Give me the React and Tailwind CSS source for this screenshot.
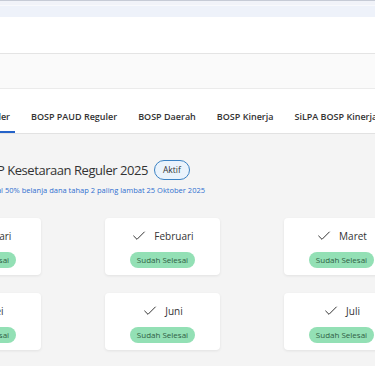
import React from 'react';
import { Check } from 'lucide-react';

const tabs = ['BOSP PAUD Reguler', 'BOSP Daerah', 'BOSP Kinerja', 'SiLPA BOSP Kinerja'];

const months = ['Januari', 'Februari', 'Maret', 'April', 'Mei', 'Juni', 'Juli', 'Agustus'];

function MonthCard({ name }) {
  return (
    <div className="w-[115px] h-[57px] bg-white rounded-[4px] shadow-[0_1px_3px_rgba(0,0,0,0.08)] flex flex-col items-center pt-[10px]">
      <div className="flex items-center gap-[7px] text-[10px] text-[#333] leading-[14px]">
        <Check size={16} strokeWidth={1.5} className="text-[#333]" />
        <span>{name}</span>
      </div>
      <span className="mt-[8px] h-[16px] px-[7px] rounded-full bg-[#93e0b5] text-[#2f5e43] text-[8px] leading-[16px] whitespace-nowrap">
        Sudah Selesai
      </span>
    </div>
  );
}

export default function App() {
  return (
    <div className="w-[375px] h-[366px] overflow-hidden bg-[#f4f4f4] font-['Open_Sans',sans-serif]">
      {/* browser-ish top strip */}
      <div className="h-[1px] bg-[#c6cbd6]"></div>
      <div className="h-[4px] bg-[#f1f3f9]"></div>
      <div className="h-[1px] bg-[#f8f9fc]"></div>
      <div className="h-[11px] bg-[#eef2fa]"></div>
      <div className="h-[37px] bg-white border-b border-[#e4e4e4]"></div>
      <div className="h-[35px] bg-[#fafafa] border-b border-[#ebebeb]"></div>

      {/* tabs */}
      <div className="h-[45px] bg-white border-b border-[#e2e2e2] flex items-end gap-[11px] whitespace-nowrap text-[9px] font-semibold text-[#333]">
        <div className="w-[15px] flex justify-end">
          <span className="pr-[5px] pb-[8px] border-b-2 border-[#2563c9] text-[#333]">BOSP Kesetaraan Reguler</span>
        </div>
        {tabs.map((t) => (
          <span key={t} className="px-[5px] pb-[8px] border-b-2 border-transparent">{t}</span>
        ))}
      </div>

      {/* heading */}
      <div className="mt-[26px] flex items-center gap-[6px] h-[20px]">
        <div className="w-[148px] flex justify-end whitespace-nowrap">
          <h2 className="text-[13px] tracking-[-0.45px] text-[#333] leading-[20px]">BOSP Kesetaraan Reguler 2025</h2>
        </div>
        <span className="h-[20px] px-[8px] rounded-full border border-[#3b82c4] bg-[#eaf3fc] text-[8.5px] leading-[18px] text-[#333]">Aktif</span>
      </div>
      <div className="mt-[4px] w-[205px] flex justify-end whitespace-nowrap">
        <p className="text-[7.5px] leading-[12px] text-[#2f6fd0]">Batas maksimal 50% belanja dana tahap 2 paling lambat 25 Oktober 2025</p>
      </div>

      {/* month cards */}
      <div className="mt-[22px] -ml-[74px] grid grid-cols-[repeat(4,115px)] gap-x-[64px] gap-y-[18px]">
        {months.map((m) => (
          <MonthCard key={m} name={m} />
        ))}
      </div>
    </div>
  );
}
